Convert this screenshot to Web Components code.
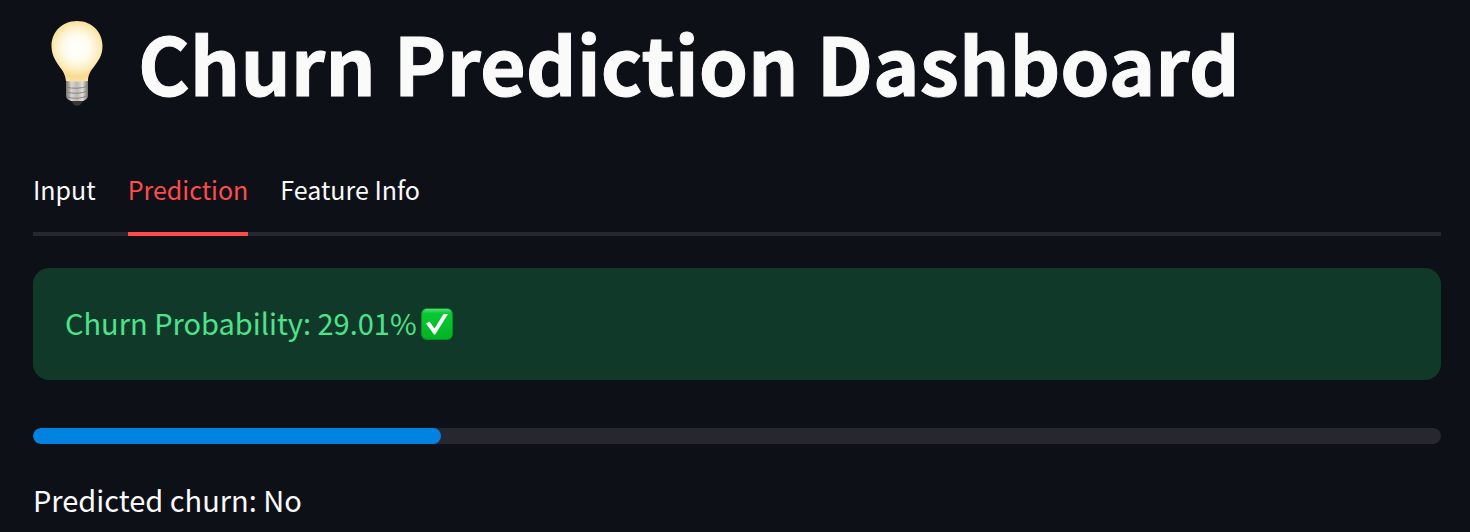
<!DOCTYPE html>
<html lang="en">
<head>
<meta charset="utf-8">
<meta name="viewport" content="width=device-width, initial-scale=1">
<title>Churn Prediction Dashboard</title>
<style>
  html { background: #0d1017; }
  body { margin: 0; color: #fafafa; font-family: "Noto Sans CJK SC", "Noto Sans", sans-serif; font-size: 29px; line-height: 44px; }
</style>
</head>
<body>
<churn-dashboard></churn-dashboard>

<template id="dashboard-template">
  <style>
    :host { display: block; padding: 12px 29px 0 33px; }
    main { display: flex; flex-direction: column; }
    tab-list { margin-top: 44px; }
    status-alert { margin-top: 32px; }
    progress-bar { margin-top: 48px; }
    p { margin: 33px 0 0; }
  </style>
  <main>
    <page-title>Churn Prediction Dashboard</page-title>
    <tab-list></tab-list>
    <status-alert>Churn Probability: 29.01%</status-alert>
    <progress-bar value="29"></progress-bar>
    <p>Predicted churn: No</p>
  </main>
</template>

<template id="title-template">
  <style>
    :host { display: block; }
    h1 { display: flex; align-items: flex-start; gap: 17px; margin: 0; font-size: 79px; line-height: 100px; font-weight: 700; white-space: nowrap; -webkit-text-stroke: 1px currentColor; }
    svg { flex: none; width: 88px; height: 104px; }
  </style>
  <h1>
    <svg viewBox="0 0 88 104" aria-hidden="true">
      <defs>
        <radialGradient id="glow" gradientUnits="userSpaceOnUse" cx="44" cy="36" r="34">
          <stop offset="0" stop-color="#fffffd"/>
          <stop offset=".36" stop-color="#fffcf0"/>
          <stop offset=".62" stop-color="#fdefc4"/>
          <stop offset=".85" stop-color="#f8da8e"/>
          <stop offset="1" stop-color="#f9e3a8"/>
        </radialGradient>
        <linearGradient id="metal">
          <stop offset="0" stop-color="#77736f"/>
          <stop offset=".25" stop-color="#d8d5d1"/>
          <stop offset=".5" stop-color="#bbb7b3"/>
          <stop offset=".75" stop-color="#e0ddda"/>
          <stop offset="1" stop-color="#77736f"/>
        </linearGradient>
      </defs>
      <path d="M37 87h15l-5 6q-3 1.500-6 0z" fill="#383633"/>
      <path d="M33 67h22v17q0 3-5 5H38q-5-2-5-5z" fill="url(#metal)"/>
      <path d="M33 75q11 3 22-1M33 80q11 3 22-1M34 85q10 3 20-1" fill="none" stroke="#8a847f" stroke-width="1"/>
      <path d="M44 9C29 9 18.500 20 18.500 34c0 10 5 16 9 22 4 5 5 9 5.500 13q11 1 22 0c0-4 1-8 5-13 5-7 9.500-12 9.500-22C69.500 20 59 9 44 9z" fill="url(#glow)"/>
    </svg>
    <span><slot></slot></span>
  </h1>
</template>

<template id="tabs-template">
  <style>
    :host { display: block; }
    div { display: flex; gap: 32px; box-shadow: inset 0 -4px #262730; }
    button { margin: 0; padding: 11px 0 25px; border: 0; border-bottom: 4px solid transparent; background: none; color: inherit; font: inherit; font-size: 25px; line-height: 36px; cursor: pointer; }
    button[aria-selected="true"] { color: #ff4b4b; border-color: #ff4b4b; }
  </style>
  <div role="tablist" aria-label="Dashboard sections">
    <button type="button" role="tab" aria-selected="false">Input</button>
    <button type="button" role="tab" aria-selected="true">Prediction</button>
    <button type="button" role="tab" aria-selected="false">Feature Info</button>
  </div>
</template>

<template id="alert-template">
  <style>
    :host { display: block; }
    div { display: flex; align-items: center; gap: 4px; padding: 32px; border-radius: 16px; background: #11392a; color: #4de38a; }
    span { padding-bottom: 4px; }
    svg { flex: none; width: 32px; height: 32px; }
  </style>
  <div role="status">
    <span><slot></slot></span>
    <svg viewBox="0 0 32 32" role="img" aria-label="Success">
      <defs>
        <linearGradient id="tile" x2="0" y2="1">
          <stop offset="0" stop-color="#63d878"/>
          <stop offset=".14" stop-color="#08ca36"/>
          <stop offset="1" stop-color="#00b420"/>
        </linearGradient>
      </defs>
      <rect width="32" height="32" rx="6" fill="#078f24"/>
      <rect x="1" y="1" width="30" height="30" rx="5" fill="url(#tile)"/>
      <path d="M5 15.500L8.500 13.500l5 7L22.500 6H27L14.200 26.500H13z" fill="#fff"/>
    </svg>
  </div>
</template>

<template id="progress-template">
  <style>
    :host { display: block; }
    .track { height: 16px; border-radius: 8px; background: #262730; overflow: hidden; }
    .fill { height: 100%; border-radius: 8px; background: #0083e0; }
  </style>
  <div class="track" role="progressbar" aria-label="Churn probability" aria-valuemin="0" aria-valuemax="100"><div class="fill"></div></div>
</template>

<script>
  class TemplateElement extends HTMLElement {
    constructor() {
      super();
      const template = document.getElementById(this.constructor.template);
      this.attachShadow({ mode: "open" }).append(template.content.cloneNode(true));
    }
  }

  class PageTitle extends TemplateElement { static template = "title-template"; }
  class StatusAlert extends TemplateElement { static template = "alert-template"; }
  class ChurnDashboard extends TemplateElement { static template = "dashboard-template"; }

  class TabList extends TemplateElement {
    static template = "tabs-template";
    connectedCallback() {
      const tabs = this.shadowRoot.querySelectorAll("button");
      tabs.forEach(tab => tab.addEventListener("click", () => {
        tabs.forEach(other => other.setAttribute("aria-selected", String(other === tab)));
      }));
    }
  }

  class ProgressBar extends TemplateElement {
    static template = "progress-template";
    connectedCallback() {
      const value = this.getAttribute("value");
      this.shadowRoot.querySelector(".track").setAttribute("aria-valuenow", value);
      this.shadowRoot.querySelector(".fill").style.width = value + "%";
    }
  }

  customElements.define("page-title", PageTitle);
  customElements.define("tab-list", TabList);
  customElements.define("status-alert", StatusAlert);
  customElements.define("progress-bar", ProgressBar);
  customElements.define("churn-dashboard", ChurnDashboard);
</script>
</body>
</html>
